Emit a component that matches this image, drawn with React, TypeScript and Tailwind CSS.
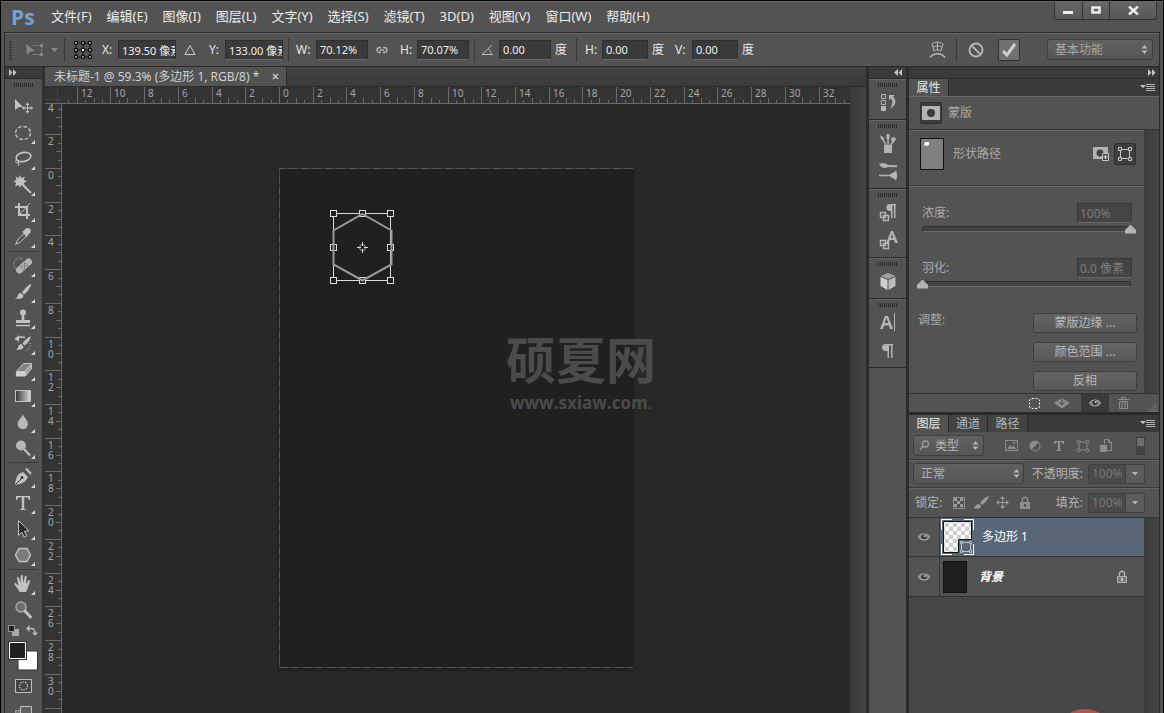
import React from 'react'

const MENUS = ['文件(F)', '编辑(E)', '图像(I)', '图层(L)', '文字(Y)', '选择(S)', '滤镜(T)', '3D(D)', '视图(V)', '窗口(W)', '帮助(H)'];

// pixels per two ruler units at 59.3% zoom
const RULER_STEP = 33.72;

interface IconProps {
  size?: number;
  w?: number;
  h?: number;
  children: React.ReactNode;
}

const Icon = ({ size = 24, w, h, children }: IconProps) => (
  <svg
    width={w || size}
    height={h || size}
    viewBox={`0 0 ${w || size} ${h || size}`}
    fill="none"
    stroke="none"
    className="shrink-0 block"
    aria-hidden="true"
  >
    {children}
  </svg>
);

const L = '#c2c2c2';

const toolIcons: Record<string, React.ReactNode> = {
  move: (
    <>
      <path d="M4 4l8 8H8l-4 3z" fill={L} />
      <path d="M16.5 8v10M11.5 13h10" stroke={L} />
      <path d="M14.5 10l2-2.5 2 2.5zM14.5 16l2 2.5 2-2.5zM13.500 11L11 13l2.500 2zM19.500 11l2.500 2-2.500 2z" fill={L} />
    </>
  ),
  marquee: <ellipse cx="12" cy="12" rx="7.500" ry="6.500" stroke={L} strokeWidth="1.400" strokeDasharray="3.600 1.900" />,
  lasso: (
    <>
      <ellipse cx="12.500" cy="10" rx="7.500" ry="4.500" stroke={L} strokeWidth="1.700" transform="rotate(-12 12.500 10)" />
      <path d="M6 13c-2 0-2 3 0 3s2-2.500.500-3c0 2 2 3 1 6" stroke={L} />
    </>
  ),
  wand: (
    <>
      <path d="M9 2l1.300 3.200L14 3.500l-1.300 3.200L16 8.500l-3.300 1.300L14 14l-3.700-2L9 15l-1.300-3L4 13.500l1.300-3.700L2.500 8.500l3-1.800L4.500 3.500l3 1.700z" fill={L} />
      <path d="M12 12l8 8" stroke={L} strokeWidth="2" />
    </>
  ),
  crop: (
    <>
      <path d="M8 4v12h11M4 8h12v12" stroke={L} strokeWidth="2" />
      <path d="M9 15L19 4" stroke={L} />
    </>
  ),
  dropper: (
    <>
      <path d="M5 19l1.500-4 7-7 2.500 2.500-7 7z" stroke={L} />
      <path d="M11 6.500l2-.500c1-3 4-4 6-2s0 5-2.500 6l-.500 2.500z" fill={L} />
      <path d="M5 19l-1 1" stroke={L} />
    </>
  ),
  heal: (
    <>
      <path d="M11 5c-5-2-8 1-8 5s2 6 5 7" stroke={L} strokeDasharray="1 1.500" />
      <rect x="3.500" y="8.500" width="19" height="7" rx="3.500" fill="#b4b4b4" transform="rotate(-42 13 12)" />
      <path d="M11 12h1M13 10h1M13 14h1M15 12h1M13 12h1" stroke="#484848" />
      <path d="M8.500 12l5 5M13 7.500l5 5" stroke="#7a7a7a" />
    </>
  ),
  brush: (
    <>
      <path d="M20.500 3.500C16 6 12.500 10 11 12.500l2 2C15.500 13 19 8.500 20.500 3.500z" fill={L} />
      <path d="M10 13c-2.500 0-3 2-3.500 3.500-.500 1-1.500 1.500-2.500 2 3.500.700 8.500.500 8.500-3z" fill={L} />
    </>
  ),
  stamp: (
    <>
      <circle cx="12" cy="6.500" r="3" fill={L} />
      <path d="M11 8h2l.500 6H19v3H5v-3h5.500z" fill={L} />
      <path d="M5 19.500h14" stroke={L} strokeWidth="1.500" />
    </>
  ),
  history: (
    <>
      <path d="M20 4c-4 2-7 5-8.500 7.500l2 2C16 12 19 8.500 20 4z" fill={L} />
      <path d="M10.500 12c-2.500 0-3 2-3.500 3.500-.500 1-1 1.500-2 2 3.500.500 7.500.500 7.500-3z" fill={L} />
      <path d="M4 7c3-2 6-2.500 10-1.500" stroke={L} strokeWidth="1.500" />
      <path d="M8 3v7L4 7z" fill={L} />
      <path d="M19 11c1 3-1 7-5 8" stroke={L} strokeDasharray="1 1.500" />
    </>
  ),
  eraser: (
    <>
      <path d="M12.500 5.500h8L14 13.500H5.500z" fill="#828282" stroke={L} />
      <path d="M5.500 13.500H14v5H5.500c-1-1-1-3.500 0-5z" fill="#cfcfcf" />
      <path d="M14.500 13.500L20.500 6.500v4l-6 7.500z" fill="#9d9d9d" stroke={L} />
    </>
  ),
  gradient: (
    <>
      <defs>
        <linearGradient id="tool-grad">
          <stop offset="0" stopColor="#333" />
          <stop offset="1" stopColor="#ddd" />
        </linearGradient>
      </defs>
      <rect x="4.500" y="6.500" width="15" height="11" fill="url(#tool-grad)" stroke={L} />
    </>
  ),
  blur: <path d="M12 4c1 4 5 6 5 10a5.200 5.200 0 01-10.400 0C6.600 10 11 8 12 4z" fill="#b8b8b8" />,
  dodge: (
    <>
      <circle cx="10" cy="9.500" r="5" fill="#b8b8b8" />
      <path d="M13 13l6 6.500" stroke={L} strokeWidth="2" />
    </>
  ),
  pen: (
    <>
      <path d="M4 20c0-5 2-9 4-11l4-2 5 5-2.500 4C12 18 9 19 4 20z" fill={L} />
      <path d="M14 4l2-1 4.500 5-1 2z" fill={L} />
      <path d="M4.500 19.500L11 13" stroke="#333" />
      <circle cx="11" cy="12.500" r="1.500" fill="#333" />
    </>
  ),
  type: <path d="M5 5h14v4h-1c-.300-2-1-2.800-3-2.800h-1.800V17c0 1 .500 1.300 2 1.400v.600H8.800v-.600c1.500-.100 2-.400 2-1.400V6.200H9C7 6.200 6.300 7 6 9H5z" fill={L} />,
  path: <path d="M7.500 3.500v15l3.300-3.200 2.400 4.700 2.500-1.200-2.300-4.500 4.600-.500z" fill="#2a2a2a" stroke={L} />,
  shape: <path d="M8 5.500h8l3.500 6.500-3.500 6.500H8L4.500 12z" fill="#7b7b7b" stroke={L} strokeWidth="1.400" />,
  hand: (
    <path
      d="M8.500 20c-1-3-3-4.500-5-7.500-.400-1.500 1-1.800 2-.800l2 2L6 6c0-1.500 1.600-1.500 2 0l1.500 5L9.700 4c.200-1.500 1.900-1.500 2.100 0l.500 7 1.400-6.500c.500-1.400 2.100-1 1.900.500L15 12l2.300-3.500c1-1.200 2.200-.300 1.700 1-1.500 3.500-2 7-4 10.500z"
      fill={L}
    />
  ),
  zoom: (
    <>
      <circle cx="10" cy="9" r="5" fill="#6e6e6e" stroke="#a8a8a8" strokeWidth="1.500" />
      <path d="M14 13l5.500 6" stroke={L} strokeWidth="3" strokeLinecap="round" />
    </>
  ),
};

const TOOL_GROUPS = [
  [
    ['move', '移动'], ['marquee', '选框'], ['lasso', '套索'], ['wand', '魔棒'], ['crop', '裁剪'], ['dropper', '吸管'],
  ],
  [
    ['heal', '修复'], ['brush', '画笔'], ['stamp', '图章'], ['history', '历史记录画笔'], ['eraser', '橡皮擦'], ['gradient', '渐变'], ['blur', '模糊'], ['dodge', '减淡'],
  ],
  [
    ['pen', '钢笔'], ['type', '文字'], ['path', '路径选择'], ['shape', '多边形'],
  ],
  [
    ['hand', '抓手'], ['zoom', '缩放'],
  ],
];

const NO_FLYOUT = ['move', 'zoom'];

// dotted drag handle
const Grip = () => (
  <div className="h-[4px] w-[20px] bg-[repeating-linear-gradient(90deg,#2c2c2c_0_1px,transparent_1px_2px)]" />
);

const Separator = () => <div className="h-[24px] w-px bg-[#3b3b3b]" />;

const DoubleArrow = ({ left = false }: { left?: boolean }) => (
  <Icon w={9} h={7}>
    <path d={left ? 'M4 0v7L0 3.500zM8 0v7L4.500 3.500z' : 'M1 0v7l3.500-3.500zM5 0v7l3.500-3.500z'} fill="#c4c4c4" />
  </Icon>
);

const UpDown = () => (
  <Icon w={7} h={9}>
    <path d="M3.500 0L6.500 3.500h-6zM3.500 9L.5 5.500h6z" fill="#b5b5b5" />
  </Icon>
);

const PanelMenu = () => (
  <button aria-label="面板菜单" className="mr-[4px]">
    <Icon w={15} h={9}>
      <path d="M0 2h6L3 5z" fill="#c4c4c4" />
      <path d="M6 1.500h9M6 3.500h9M6 5.500h9M6 7.500h9" stroke="#b0b0b0" />
    </Icon>
  </button>
);

const Frame = ({ color = '#a8a8a8', s = 16 }: { color?: string; s?: number }) => (
  <svg width={s} height={s} viewBox="0 0 16 16" fill="none" className="block" aria-hidden="true">
    <path d="M3.500 3.500h9v9h-9z" stroke={color} />
    <g fill="#474747" stroke={color}>
      <path d="M1.500 1.500h3v3h-3zM11.500 1.500h3v3h-3zM1.500 11.500h3v3h-3zM11.500 11.500h3v3h-3z" />
    </g>
  </svg>
);

const Eye = () => (
  <Icon w={12} h={10}>
    <path d="M.5 5C2.500 1 9.500 1 11.500 5 9.500 9 2.500 9 .5 5z" fill="#7d7d7d" stroke="#b8b8b8" />
    <circle cx="6" cy="4.700" r="2.500" fill="#3a3a3a" />
    <circle cx="6.800" cy="4" r="1" fill="#e0e0e0" />
  </Icon>
);

const Lock = ({ color }: { color: string }) => (
  <Icon w={12} h={13}>
    <path d="M3.500 6V3.500c0-3 5-3 5 0V6" stroke={color} strokeWidth="1.400" />
    <path d="M1.500 6.500h9v6h-9z" fill="#777" stroke={color} />
    <path d="M6 8v3" stroke="#e0e0e0" strokeWidth="1.500" />
  </Icon>
);

interface FieldProps {
  label: string;
  value: string;
  labelClass: string;
  inputClass: string;
  unit?: string;
}

const Field = ({ label, value, labelClass, inputClass, unit }: FieldProps) => (
  <label className="flex items-center">
    <span className={labelClass}>{label}</span>
    <input
      type="text"
      defaultValue={value}
      className={`h-[20px] border border-[#2f2f2f] border-b-[#6a6a6a] bg-[#3a3a3a] pl-[3px] text-[11px] text-[#f0f0f0] outline-none ${inputClass}`}
    />
    {unit && <span className="ml-[4px] text-[12px]">{unit}</span>}
  </label>
);

const TitleBar = () => (
  <header className="flex h-[31px] items-start justify-between pl-[10px] pr-[6px]">
    <div className="flex h-full items-center">
      <span className="w-[36px] font-['Open_Sans',sans-serif] text-[21px] font-bold leading-[24px] text-[#73a3d4]">Ps</span>
      <nav className="ml-[4px] flex gap-[15px] text-[13px] text-[#ececec]">
        {MENUS.map((m) => (
          <button key={m} className="whitespace-nowrap">{m}</button>
        ))}
      </nav>
    </div>
    <div className="flex h-[19px] divide-x divide-[#333] rounded-b-[3px] border border-t-0 border-[#333] bg-linear-to-b from-[#676767] to-[#585858]">
      <button aria-label="最小化" className="flex w-[28px] items-center justify-center">
        <Icon w={11} h={9}><path d="M0 5h10v3H0z" fill="#ededed" /></Icon>
      </button>
      <button aria-label="最大化" className="flex w-[27px] items-center justify-center">
        <Icon w={11} h={9}><path d="M1.500 1.500h7v5h-7z" stroke="#ededed" strokeWidth="2.600" /></Icon>
      </button>
      <button aria-label="关闭" className="flex w-[46px] items-center justify-center">
        <Icon w={11} h={9}><path d="M1 .5l9 8M10 .5l-9 8" stroke="#ededed" strokeWidth="2.400" /></Icon>
      </button>
    </div>
  </header>
);

const OptionsBar = () => (
  <section className="flex h-[35px] shrink-0 items-center justify-between border-y border-[#2a2a2a] pr-[6px] text-[12px] text-[#e6e6e6] shadow-[inset_0_1px_0_#686868]">
    <div className="flex items-center">
      <div className="ml-[4px] h-[20px] w-[3px] bg-[repeating-linear-gradient(0deg,#333_0_1px,transparent_1px_2px)]" />
      <button aria-label="变换工具" className="ml-[14px] flex items-center gap-[7px]">
        <Icon w={18} h={14}>
          <path d="M7.500 2.500h8v9h-10" stroke="#868686" strokeDasharray="2 1" />
          <path d="M0 1l9 7-5 .5L1 12z" fill="#868686" />
          <path d="M14 1h3v3h-3zM14 10h3v3h-3z" fill="#868686" />
        </Icon>
        <Icon w={7} h={4}><path d="M0 0h7L3.500 4z" fill="#8a8a8a" /></Icon>
      </button>
      <div className="ml-[6px]"><Separator /></div>
      <div className="ml-[8px]">
        <Icon w={20} h={20}>
          <path d="M3 3h14v14H3zM10 3v14M3 10h14" stroke="#111" />
          <g fill="#8a8a8a" stroke="#0c0c0c">
            <path d="M1.500 1.500h3v3h-3zM8.500 1.500h3v3h-3zM15.500 1.500h3v3h-3zM1.500 8.500h3v3h-3zM15.500 8.500h3v3h-3zM1.500 15.500h3v3h-3zM8.500 15.500h3v3h-3zM15.500 15.500h3v3h-3z" />
          </g>
          <path d="M8.500 8.500h3v3h-3z" fill="#fff" stroke="#0c0c0c" />
        </Icon>
      </div>
      <div className="ml-[9px]">
        <Field label="X:" value="139.50 像素" labelClass="w-[16px]" inputClass="w-[58px]" />
      </div>
      <div className="ml-[8px]">
        <Icon w={12} h={12}><path d="M6 1.500l5 9H1z" stroke="#cfcfcf" /></Icon>
      </div>
      <div className="ml-[13px]">
        <Field label="Y:" value="133.00 像素" labelClass="w-[16px]" inputClass="w-[58px]" />
      </div>
      <div className="ml-[5px]"><Separator /></div>
      <div className="ml-[7px]">
        <Field label="W:" value="70.12%" labelClass="w-[20px]" inputClass="w-[52px]" />
      </div>
      <div className="ml-[8px]">
        <Icon w={12} h={8}>
          <path d="M5 1.500H3.500a2.500 2.500 0 000 5H5M7 1.500h1.500a2.500 2.500 0 010 5H7M3.500 4h5" stroke="#b4b4b4" strokeWidth="1.400" />
        </Icon>
      </div>
      <div className="ml-[12px]">
        <Field label="H:" value="70.07%" labelClass="w-[17px]" inputClass="w-[52px]" />
      </div>
      <div className="ml-[5px]"><Separator /></div>
      <div className="ml-[6px]">
        <Icon w={13} h={12}><path d="M11 1L1 10.500h11M7 4.500c2 1.500 3 3.500 3 6" stroke="#b8b8b8" /></Icon>
      </div>
      <div className="ml-[5px]">
        <Field label="" value="0.00" labelClass="w-0" inputClass="w-[52px]" unit="度" />
      </div>
      <div className="ml-[9px]"><Separator /></div>
      <div className="ml-[8px]">
        <Field label="H:" value="0.00" labelClass="w-[17px]" inputClass="w-[46px]" unit="度" />
      </div>
      <div className="ml-[11px]">
        <Field label="V:" value="0.00" labelClass="w-[17px]" inputClass="w-[46px]" unit="度" />
      </div>
    </div>
    <div className="flex items-center">
      <button aria-label="变形">
        <Icon w={17} h={18}>
          <path d="M3 3c3-2.500 8-2.500 11 0l-2 7c-2-1.500-5-1.500-7 0zM8.500 1v8M4 6c3-1.500 6-1.500 9 0" stroke="#b8b8b8" />
          <path d="M1 16.500c4-5 11-5 15 0" stroke="#b8b8b8" strokeWidth="1.500" />
        </Icon>
      </button>
      <div className="ml-[10px]"><Separator /></div>
      <button aria-label="取消变换" className="ml-[11px]">
        <Icon w={16} h={16}>
          <circle cx="8" cy="8" r="6.500" stroke="#b4b4b4" strokeWidth="2" />
          <path d="M3.500 3.500l9 9" stroke="#b4b4b4" strokeWidth="2" />
        </Icon>
      </button>
      <button aria-label="进行变换" className="ml-[14px] flex h-[22px] w-[22px] items-center justify-center rounded-[2px] border border-[#303030] bg-[#707070]">
        <Icon w={16} h={16}><path d="M2 9l4 4L14 2" stroke="#d0d0d0" strokeWidth="3" /></Icon>
      </button>
      <label className="ml-[27px] flex h-[21px] w-[106px] items-center rounded-[3px] border border-[#3f3f3f] bg-linear-to-b from-[#616161] to-[#555] pl-[7px] pr-[4px]">
        <select aria-label="工作区" className="min-w-0 flex-1 appearance-none bg-transparent text-[12px] text-[#a9a9a9] outline-none">
          <option>基本功能</option>
        </select>
        <UpDown />
      </label>
    </div>
  </section>
);

const Toolbar = () => (
  <aside className="flex w-[40px] shrink-0 flex-col border-r-[3px] border-[#303030] bg-[#535353]">
    <div className="flex h-[12px] shrink-0 items-center border-b border-[#2a2a2a] bg-[#3a3a3a] pl-[3px]">
      <DoubleArrow />
    </div>
    <div className="flex h-[15px] shrink-0 justify-center pt-[4px]"><Grip /></div>
    {TOOL_GROUPS.map((group, i) => (
      <div key={i} className="shrink-0">
        {i > 0 && <div className="mx-[4px] my-[1px] h-px bg-[#3c3c3c]" />}
        {group.map(([id, name]) => (
          <button key={id} aria-label={name} className="flex h-[26px] w-full items-center pl-[6px]">
            <Icon>{toolIcons[id]}</Icon>
            {!NO_FLYOUT.includes(id) && (
              <svg width="4" height="4" viewBox="0 0 4 4" className="-ml-[4px] mb-[2px] self-end" aria-hidden="true">
                <path d="M4 0v4H0z" fill="#dcdcdc" />
              </svg>
            )}
          </button>
        ))}
      </div>
    ))}
    <div className="flex h-[14px] shrink-0 items-center gap-[7px] pl-[3px]">
      <button aria-label="默认颜色">
        <Icon w={11} h={11}>
          <path d="M4 4h7v7H4z" fill="#aaa" />
          <path d="M.5.5h6v6h-6z" fill="#222" stroke="#999" />
        </Icon>
      </button>
      <button aria-label="切换颜色">
        <Icon w={12} h={11}>
          <path d="M2 3.500h3c3 0 4 1.500 4 5" stroke="#b8b8b8" strokeWidth="1.300" />
          <path d="M3.500 0v7L0 3.500zM6 7.500h6L9 11z" fill="#b8b8b8" />
        </Icon>
      </button>
    </div>
    <svg width="30" height="32" viewBox="0 0 30 32" className="ml-[3px] mt-[4px] shrink-0" aria-hidden="true">
      <path d="M10 10h19.500v19H10z" fill="#fff" stroke="#333" />
      <path d="M0 0h19v19H0z" fill="#333" />
      <path d="M1.500 1.500h16v16h-16z" fill="#202020" stroke="#fff" />
    </svg>
    <div className="flex h-[26px] shrink-0 items-center justify-center">
      <button aria-label="快速蒙版">
        <Icon w={17} h={14}>
          <path d="M.5.5h16v13H.5z" fill="#454545" stroke="#bdbdbd" />
          <circle cx="8.500" cy="7" r="4" stroke="#ddd" strokeWidth="1.200" strokeDasharray="1.200 1.300" />
        </Icon>
      </button>
    </div>
    <div className="flex shrink-0 justify-center pt-[7px]">
      <button aria-label="屏幕模式">
        <Icon w={17} h={14}>
          <path d="M.5 4.500h7v9h-7z" fill="#777" stroke="#999" />
          <path d="M5.500.5h11v9h-11z" fill="#606060" stroke="#c2c2c2" />
        </Icon>
      </button>
    </div>
  </aside>
);

const range = (from: number, to: number) => Array.from({ length: to - from + 1 }, (_, i) => from + i);

const HorizontalRuler = () => {
  const zero = 234;
  return (
    <svg className="block h-[17px] w-full bg-[#333]" fontSize="10" fill="#a6a6a6" aria-label="水平标尺">
      {range(-6, 16).map((n) => {
        const x = Math.round(zero + n * RULER_STEP);
        return (
          <g key={n}>
            <path d={`M${x}.5 0v16`} stroke="#6a6a6a" />
            <text x={x + 4} y="10">{Math.abs(n * 2)}</text>
          </g>
        );
      })}
      {range(-25, 200).map((n) => {
        if (n % 4 === 0) return null;
        const x = Math.round(zero + (n * RULER_STEP) / 4);
        return <path key={n} d={`M${x}.5 ${n % 2 === 0 ? 11 : 13}V16`} stroke="#6a6a6a" />;
      })}
      <path d="M0 16.500h4000" stroke="#6a6a6a" />
      <path d="M12.500 0v17M0 12.500h17" stroke="#555" strokeDasharray="1 1" />
    </svg>
  );
};

const VerticalRuler = () => {
  const zero = 64;
  return (
    <svg className="block h-full w-[17px] shrink-0 bg-[#333]" fontSize="10" fill="#a6a6a6" aria-label="垂直标尺">
      {range(-2, 15).map((n) => {
        const y = Math.round(zero + n * RULER_STEP);
        return (
          <g key={n}>
            <path d={`M0 ${y}.5h16`} stroke="#6a6a6a" />
            {String(Math.abs(n * 2)).split('').map((d, i) => (
              <text key={i} x="3" y={y + 11 + i * 10}>{d}</text>
            ))}
          </g>
        );
      })}
      {range(-8, 160).map((n) => {
        if (n % 4 === 0 && n < 64) return null;
        const y = Math.round(zero + (n * RULER_STEP) / 4);
        const start = n % 4 === 0 ? 0 : n % 2 === 0 ? 11 : 13;
        return <path key={n} d={`M${start} ${y}.5H16`} stroke="#6a6a6a" />;
      })}
      <path d="M16.500 0v4000" stroke="#6a6a6a" />
    </svg>
  );
};

const HANDLES = [[3, 3], [32, 3], [60, 3], [3, 37], [60, 37], [3, 70], [32, 70], [60, 70]];

const Artboard = () => (
  <div className="relative min-w-0 flex-1 overflow-hidden bg-[#282828]">
    <div className="absolute left-[217px] top-[64px] bg-[#202020] shadow-[0_2px_3px_#1c1c1c]">
      <svg width="354" height="500" viewBox="0 0 354 500" fill="none" className="block" aria-hidden="true">
        <path d="M354 .5H.5v499H354" stroke="#3e3e3e" />
        <path d="M354 .5H.5v499H354" stroke="#585858" strokeDasharray="8 4" />
      </svg>
    </div>
    <svg width="66" height="75" viewBox="0 0 66 75" fill="none" className="absolute left-[268px] top-[106px]" aria-label="多边形 1">
      <path d="M3.500 3.500h57v67h-57z" stroke="#dcdcdc" />
      <g fill="#202020" stroke="#dcdcdc">
        {HANDLES.map(([x, y]) => (
          <rect key={`${x}-${y}`} x={x - 2.5} y={y - 2.5} width="6" height="6" />
        ))}
      </g>
      <path d="M32.500 4L61.500 20.500v34L32.500 70.500 3.500 54.500v-34z" stroke="#9a9a9a" strokeWidth="2" />
      <circle cx="32.500" cy="37.500" r="3" stroke="#a0a0a0" />
      <path d="M32.500 32v4M32.500 39v4M27 37.500h4M34 37.500h4" stroke="#dcdcdc" />
    </svg>
    <div className="absolute left-[444px] top-[225px] font-bold text-[#4b4b4b]">
      <div className="text-[50px] leading-[62px]">硕夏网</div>
      <div className="ml-[4px] font-['Open_Sans',sans-serif] text-[17px] leading-[24px]">www.sxiaw.com<span className="text-[12px]">.</span></div>
    </div>
  </div>
);

const DocumentArea = () => (
  <main className="flex min-w-0 flex-1 flex-col bg-[#404040]">
    <div className="flex h-[20px] shrink-0 border-b border-[#2c2c2c] bg-linear-to-b from-[#444] to-[#393939]">
      <div className="flex w-[242px] items-center justify-between border-r border-[#2c2c2c] bg-[#535353] pl-[9px] pr-[7px] text-[12px] text-[#d2d2d2]">
        <span className="whitespace-nowrap">未标题-1 @ 59.3% (多边形 1, RGB/8) *</span>
        <button aria-label="关闭文档">
          <Icon w={7} h={7}><path d="M1 1l5 5M6 1L1 6" stroke="#c8c8c8" strokeWidth="1.500" /></Icon>
        </button>
      </div>
    </div>
    <div className="flex min-h-0 flex-1">
      <div className="flex min-w-0 flex-1 flex-col">
        <HorizontalRuler />
        <div className="flex min-h-0 flex-1">
          <VerticalRuler />
          <Artboard />
        </div>
      </div>
      <div className="w-[16px] shrink-0 bg-linear-to-r from-[#393939] to-[#444]" />
    </div>
  </main>
);

const G = '#b4b4b4';

const DOCK: { name: string; icon: React.ReactNode }[][] = [
  [
    {
      name: '历史记录',
      icon: (
        <>
          <path d="M3.500 2.500h4v4h-4zM3.500 8.500h4v4h-4z" stroke={G} />
          <path d="M3 14h5v5H3z" fill={G} />
          <path d="M11 3h6l-2 1.500c4 4 3 9-3 12 3-4 3-7 1-10L11 8z" fill={G} />
        </>
      ),
    },
  ],
  [
    {
      name: '画笔',
      icon: (
        <>
          <path d="M6 12h8v8H6z" fill={G} />
          <path d="M8 12L4 5M10 12V4M12.500 12l4-5" stroke={G} strokeWidth="1.500" />
          <path d="M2 2l4 3v3L3 6zM8.500 1h3v5h-3zM13 6l1.500-2L18 5l-1 3-3 1z" fill={G} />
        </>
      ),
    },
    {
      name: '画笔预设',
      icon: (
        <>
          <path d="M1 3c3-1 7-1 9 1l9 .3v2L10 6C7 8 3 7 1 3z" fill={G} />
          <path d="M1 14.500h12" stroke={G} strokeWidth="1.500" />
          <path d="M12 14c1-2 4-2 6-4.500 1.500 3 1.500 7 0 10-2-2.500-5-2.500-6-4.500z" fill={G} />
        </>
      ),
    },
  ],
  [
    {
      name: '段落样式',
      icon: (
        <>
          <path d="M18 2h-6c-5 0-5 7 0 7h1v7h1.500V3.500H16V16h1.500V3.500h.5z" fill={G} />
          <path d="M2.500 10.500h5v5h-5zM5.500 13.500h5v5h-5z" fill="#535353" stroke={G} strokeWidth="1.400" />
        </>
      ),
    },
    {
      name: '字符样式',
      icon: (
        <>
          <path d="M8 13l5-12h2l5 12h-3l-1-3h-4l-1 3zM12.700 8h2.600L14 4z" fill={G} />
          <path d="M2.500 10.500h5v5h-5zM5.500 13.500h5v5h-5z" fill="#535353" stroke={G} strokeWidth="1.400" />
        </>
      ),
    },
  ],
  [
    {
      name: '3D',
      icon: (
        <>
          <path d="M10 2l7.500 3L10 8 2.500 5z" fill="#a0a0a0" />
          <path d="M2.500 6l7 3v10l-7-4z" fill="#d0d0d0" />
          <path d="M17.500 6l-7 3v10l7-4z" fill="#bcbcbc" />
        </>
      ),
    },
  ],
  [
    {
      name: '字符',
      icon: (
        <>
          <path d="M2 17L7 4h3l5 13h-3l-1-3.500H6L5 17zM6.700 11h3.600L8.500 6z" fill={G} />
          <path d="M16.500 1v18" stroke={G} />
        </>
      ),
    },
    {
      name: '段落',
      icon: <path d="M15 4H8c-5.500 0-5.500 7 0 7h1.500v7H11V5.500h2V18h1.500V5.500h.5z" fill={G} />,
    },
  ],
];

const IconDock = () => (
  <aside className="flex w-[43px] shrink-0 flex-col border-x-[3px] border-[#2c2c2c] bg-[#535353]">
    <div className="flex h-[12px] shrink-0 items-center justify-end border-b border-[#2a2a2a] bg-[#3a3a3a] pr-[3px]">
      <DoubleArrow left />
    </div>
    {DOCK.map((items, i) => (
      <div key={i} className="flex shrink-0 flex-col items-center border-b border-[#2a2a2a] pb-[3px] pt-[4px] shadow-[inset_0_1px_0_#646464]">
        <Grip />
        <div className="pt-px">
          {items.map((item) => (
            <button key={item.name} aria-label={item.name} className="flex h-[28px] items-center">
              <Icon size={20}>{item.icon}</Icon>
            </button>
          ))}
        </div>
      </div>
    ))}
  </aside>
);

const MaskSlider = ({ label, value, amount }: { label: string; value: string; amount: number }) => (
  <div className="h-[55px]">
    <div className="flex items-center justify-between pl-[13px] pr-[12px]">
      <label htmlFor={label}>{label}:</label>
      <input
        id={label}
        type="text"
        disabled
        defaultValue={value}
        className="h-[20px] w-[55px] border border-[#383838] border-b-[#666] bg-[#444] pl-[2px] text-[12px] text-[#7c7c7c]"
      />
    </div>
    <div className="relative mx-[8px] h-[12px]">
      <div className="absolute inset-x-[5px] top-[3px] h-[6px] rounded-[3px] border border-[#303030] border-b-[#6a6a6a] bg-[#424242]" />
      <input
        type="range"
        aria-label={label}
        defaultValue={amount}
        className="absolute inset-x-0 top-0 h-[12px] w-full appearance-none bg-transparent [&::-webkit-slider-thumb]:h-[9px] [&::-webkit-slider-thumb]:w-[11px] [&::-webkit-slider-thumb]:appearance-none [&::-webkit-slider-thumb]:bg-[#b4b4b4] [&::-webkit-slider-thumb]:[clip-path:polygon(50%_0,100%_60%,100%_100%,0_100%,0_60%)]"
      />
    </div>
  </div>
);

const PanelButton = ({ children }: { children: React.ReactNode }) => (
  <button className="h-[20px] w-[104px] rounded-[3px] border border-[#3e3e3e] bg-linear-to-b from-[#646464] to-[#585858] text-[12px] leading-[18px] text-[#b8b8b8]">
    {children}
  </button>
);

const PropertiesPanel = () => (
  <section className="shrink-0 text-[12px] text-[#a9a9a9]">
    <div className="flex h-[17px] items-center justify-between bg-[#3a3a3a]">
      <h2 className="flex h-full w-[40px] items-center justify-center border-r border-[#2a2a2a] bg-[#535353] text-[12px] text-[#e6e6e6]">属性</h2>
      <PanelMenu />
    </div>
    <div className="flex h-[34px] items-center gap-[6px] border-b border-[#333] pl-[11px] shadow-[inset_0_1px_0_#686868]">
      <span className="flex h-[22px] w-[22px] items-center justify-center rounded-[2px] border border-[#2e2e2e] bg-[#3c3c3c]">
        <Icon w={18} h={14}>
          <path d="M0 0h18v14H0z" fill="#b2b2b2" />
          <circle cx="9" cy="7" r="4" fill="#3c3c3c" />
        </Icon>
      </span>
      <span>蒙版</span>
    </div>
    <div className="flex">
      <div className="min-w-0 flex-1">
        <div className="flex h-[56px] items-center justify-between border-b border-[#383838] pb-[7px] pl-[11px] pr-[8px] shadow-[inset_0_1px_0_#686868]">
          <div className="flex items-center gap-[9px]">
            <span className="h-[32px] w-[24px] border border-[#111] bg-[#808080] pl-[3px] pt-[3px]">
              <Icon w={5} h={5}><path d="M1 0h4v3L3 4 0 3z" fill="#fff" /></Icon>
            </span>
            <span>形状路径</span>
          </div>
          <div className="flex items-center gap-[4px]">
            <button aria-label="添加蒙版">
              <Icon w={17} h={14}>
                <path d="M0 0h15v12H0z" fill="#b2b2b2" />
                <circle cx="7" cy="6" r="3.500" fill="#444" />
                <path d="M9.500 6.500h6v7h-6z" fill="#444" stroke="#c6c6c6" />
                <path d="M12.500 8v4M10.500 10h4" stroke="#eee" />
              </Icon>
            </button>
            <button aria-label="矢量蒙版" className="flex h-[22px] w-[22px] items-center justify-center rounded-[2px] border border-[#2e2e2e] bg-[#3e3e3e]">
              <Frame color="#c6c6c6" />
            </button>
          </div>
        </div>
        <div className="h-[207px] pt-[17px] shadow-[inset_0_1px_0_#686868]">
          <MaskSlider label="浓度" value="100%" amount={100} />
          <MaskSlider label="羽化" value="0.0 像素" amount={0} />
          <div className="flex justify-between pl-[9px] pr-[7px]">
            <span className="leading-[14px]">调整:</span>
            <div className="flex flex-col gap-[9px]">
              <PanelButton>蒙版边缘 ...</PanelButton>
              <PanelButton>颜色范围 ...</PanelButton>
              <PanelButton>反相</PanelButton>
            </div>
          </div>
        </div>
      </div>
      <div className="w-[15px] border-l border-[#3a3a3a] bg-linear-to-r from-[#3e3e3e] to-[#464646]" />
    </div>
    <div className="flex h-[19px] items-center border-t border-[#333] bg-[#535353] pl-[120px]">
      <button aria-label="载入选区">
        <Icon w={11} h={11}><path d="M3 .5h5a2.500 2.500 0 012.500 2.500v5A2.500 2.500 0 018 10.500H3A2.500 2.500 0 01.5 8V3A2.500 2.500 0 013 .5z" stroke="#fff" strokeDasharray="2 1.500" /></Icon>
      </button>
      <button aria-label="应用蒙版" className="ml-[14px]">
        <Icon w={16} h={12}>
          <path d="M0 6l8-5 8 5-8 5.500z" fill="#8a8a8a" />
          <path d="M8 1v6M5.500 5L8 8l2.500-3" stroke="#444" />
        </Icon>
      </button>
      <button aria-label="停用蒙版" className="ml-[11px] flex h-full w-[28px] items-center justify-center bg-[#3a3a3a]"><Eye /></button>
      <button aria-label="删除蒙版" className="ml-[9px]">
        <Icon w={11} h={12}>
          <path d="M0 2.500h11M3.500 2V.5h4V2M1.500 4.500h8v7h-8zM4 4v7M7 4v7" stroke="#8c8c8c" />
        </Icon>
      </button>
      <span className="ml-auto mr-[2px] mt-auto">
        <Icon w={9} h={9}><path d="M8 0v9M6 2v7M4 4v5M2 6v3M0 8v1" stroke="#888" strokeDasharray="1 1" /></Icon>
      </span>
    </div>
  </section>
);

const PercentBox = ({ label, name }: { label: string; name: string }) => (
  <div className="flex items-center gap-[5px]">
    <label htmlFor={name}>{label}:</label>
    <div className="flex h-[20px] w-[57px] rounded-[2px] border border-[#404040]">
      <input id={name} disabled defaultValue="100%" className="w-[36px] bg-[#4a4a4a] pl-[3px] text-[12px] text-[#767676]" />
      <button aria-label={`${label}选项`} className="flex flex-1 items-center justify-center border-l border-[#404040] bg-[#5c5c5c]">
        <Icon w={6} h={4}><path d="M0 0h6L3 3.500z" fill="#b5b5b5" /></Icon>
      </button>
    </div>
  </div>
);

const LayersPanel = () => (
  <section className="flex min-h-0 flex-1 flex-col border-t-[3px] border-[#2a2a2a] text-[12px] text-[#b4b4b4]">
    <div className="flex h-[17px] shrink-0 items-center justify-between bg-[#3a3a3a]">
      <div role="tablist" className="flex h-full">
        <button role="tab" aria-selected="true" className="w-[40px] border-r border-[#2a2a2a] bg-[#535353] leading-[17px] text-[#ececec]">图层</button>
        <button role="tab" className="w-[39px] border-r border-[#2a2a2a] bg-[#444] leading-[17px]">通道</button>
        <button role="tab" className="w-[40px] border-r border-[#2a2a2a] bg-[#444] leading-[17px]">路径</button>
      </div>
      <PanelMenu />
    </div>
    <div className="flex h-[28px] shrink-0 items-center border-b border-[#3a3a3a] pl-[4px] pr-[14px]">
      <label className="flex h-[21px] w-[71px] items-center rounded-[3px] border border-[#3f3f3f] bg-linear-to-b from-[#616161] to-[#565656] px-[4px]">
        <Icon w={14} h={11}>
          <circle cx="7.500" cy="4" r="3" stroke="#9a9a9a" strokeWidth="1.400" />
          <path d="M5.500 6L2 9.500" stroke="#9a9a9a" strokeWidth="1.600" />
        </Icon>
        <select aria-label="图层类型" className="ml-[3px] min-w-0 flex-1 appearance-none bg-transparent text-[12px] outline-none">
          <option>类型</option>
        </select>
        <UpDown />
      </label>
      <div className="ml-[21px] flex flex-1 items-center gap-[10px]">
        <button aria-label="像素图层">
          <Icon w={13} h={12}>
            <path d="M.5.5h12v10H.5z" stroke="#8e8e8e" />
            <path d="M2 9l3-4 2 2 2-1.500L11 9z" fill="#8e8e8e" />
            <path d="M8 3h2" stroke="#8e8e8e" strokeWidth="2" />
          </Icon>
        </button>
        <button aria-label="调整图层">
          <Icon w={14} h={12}>
            <circle cx="7" cy="6" r="5" stroke="#8e8e8e" />
            <path d="M3.500 9.500a5 5 0 010-7c2-2 5-2 7 0z" fill="#8e8e8e" />
          </Icon>
        </button>
        <button aria-label="文字图层">
          <Icon w={14} h={12}><path d="M2 1h10v3h-1L10 2.300H8V10l1.500.5v.5h-5v-.5L6 10V2.300H4L3 4H2z" fill="#939393" /></Icon>
        </button>
        <button aria-label="形状图层"><Frame color="#8e8e8e" s={14} /></button>
        <button aria-label="智能对象">
          <Icon w={13} h={13}>
            <path d="M4.500 5V.5h4l3 3v8h-5M8.500.5v3h3" stroke="#8e8e8e" />
            <path d="M0 6h7v7H0z" fill="#8e8e8e" />
          </Icon>
        </button>
      </div>
      <button aria-label="打开图层过滤" className="flex h-[18px] w-[9px] items-start border border-[#3e3e3e] bg-[#444]">
        <span className="h-[8px] w-full bg-[#6c6c6c]" />
      </button>
    </div>
    <div className="flex h-[28px] shrink-0 items-center justify-between border-b border-[#3a3a3a] pl-[4px] pr-[14px] shadow-[inset_0_1px_0_#646464]">
      <label className="flex h-[21px] w-[111px] items-center rounded-[3px] border border-[#3f3f3f] bg-linear-to-b from-[#616161] to-[#565656] pl-[7px] pr-[3px]">
        <select aria-label="混合模式" className="min-w-0 flex-1 appearance-none bg-transparent text-[12px] outline-none">
          <option>正常</option>
        </select>
        <UpDown />
      </label>
      <PercentBox label="不透明度" name="opacity" />
    </div>
    <div className="flex h-[30px] shrink-0 items-center border-b border-[#333] pl-[6px] pr-[14px] shadow-[inset_0_1px_0_#646464]">
      <span className="w-[38px]">锁定:</span>
      <div className="flex flex-1 items-center gap-[8px]">
        <button aria-label="锁定透明像素">
          <Icon w={12} h={12}>
            <path d="M.5.5h11v11H.5z" stroke="#8e8e8e" />
            <path d="M1 1h3v3H1zM7 1h3v3H7zM4 4h3v3H4zM1 7h3v3H1zM7 7h3v3H7z" fill="#9a9a9a" />
          </Icon>
        </button>
        <button aria-label="锁定图像像素">
          <Icon w={17} h={14}>
            <path d="M16 0c-4 1-8 5-9 7l2 2c2-1 6-5 7-9zM6 8c-3 0-3 3-6 4 3 1.500 8 1 8-2z" fill="#999" />
          </Icon>
        </button>
        <button aria-label="锁定位置" className="-ml-[2px]">
          <Icon w={13} h={13}>
            <path d="M6.500 1v11M1 6.500h11" stroke="#999" />
            <path d="M4 3l2.500-3L9 3zM4 10l2.500 3L9 10zM3 4L0 6.500 3 9zM10 4l3 2.500L10 9z" fill="#999" />
          </Icon>
        </button>
        <button aria-label="锁定全部" className="ml-[2px]">
          <Icon w={12} h={13}>
            <path d="M3.500 6V3.500c0-3 5-3 5 0V6" stroke="#8e8e8e" strokeWidth="1.400" />
            <path d="M1 6h10v7H1z" fill="#8e8e8e" />
            <path d="M6 8v3" stroke="#444" strokeWidth="1.500" />
          </Icon>
        </button>
      </div>
      <PercentBox label="填充" name="fill" />
    </div>
    <div className="flex min-h-0 flex-1 bg-[#464646]">
      <ul className="min-w-0 flex-1 text-white">
        <li className="flex h-[39px] border-b border-[#333] bg-[#596678]">
          <button aria-label="显示图层" className="flex w-[31px] items-center justify-center border-r border-[#3a3a3a] bg-[#535353]"><Eye /></button>
          <svg width="33" height="36" viewBox="0 0 33 36" className="ml-[1px] mt-[1px] shrink-0" fill="none" aria-hidden="true">
            <defs>
              <pattern id="checker" width="8" height="8" patternUnits="userSpaceOnUse">
                <path d="M0 0h8v8H0z" fill="#fff" />
                <path d="M0 0h4v4H0zM4 4h4v4H4z" fill="#ccc" />
              </pattern>
            </defs>
            <path d="M.5 11V.5H11M23 .5h9.500V11M.5 25v10.500H11M23 35.500h9.500V25" stroke="#fff" />
            <path d="M2.500 2.500h28v18h-13v13h-15z" fill="url(#checker)" stroke="#111" />
            <path d="M20.500 23.500h9v9h-9z" stroke="#b9c2ce" />
            <path d="M19.500 22.500h2v2h-2zM28.500 22.500h2v2h-2zM19.500 31.500h2v2h-2zM28.500 31.500h2v2h-2z" fill="#596678" stroke="#b9c2ce" />
          </svg>
          <span className="ml-[8px] self-center">多边形 1</span>
        </li>
        <li className="flex h-[40px] items-center border-b border-[#333] bg-[#535353]">
          <button aria-label="显示图层" className="flex h-full w-[31px] items-center justify-center border-r border-[#3a3a3a]"><Eye /></button>
          <span className="ml-[3px] h-[32px] w-[24px] border border-[#111] bg-[#202020]" />
          <span className="ml-[12px] flex-1 font-bold italic">背景</span>
          <span className="mr-[16px]"><Lock color="#b4b4b4" /></span>
        </li>
      </ul>
      <div className="w-[15px] bg-linear-to-r from-[#3c3c3c] to-[#444]" />
    </div>
  </section>
);

const App = () => (
  <div className="relative flex h-screen flex-col overflow-hidden border-x border-t border-black bg-[#535353] font-['Noto_Sans','Noto_Sans_CJK_SC',sans-serif] shadow-[inset_0_1px_0_#686868]">
    <TitleBar />
    <div className="mx-[3px] flex min-h-0 flex-1 flex-col border-x border-[#2a2a2a]">
      <OptionsBar />
      <div className="flex min-h-0 flex-1">
        <Toolbar />
        <DocumentArea />
        <IconDock />
        <div className="flex w-[250px] shrink-0 flex-col">
          <div className="flex h-[12px] shrink-0 items-center justify-end border-b border-[#2a2a2a] bg-[#3a3a3a] pr-[3px]">
            <DoubleArrow />
          </div>
          <PropertiesPanel />
          <LayersPanel />
        </div>
      </div>
    </div>
    <div className="absolute -bottom-[56px] right-[48px] h-[60px] w-[60px] rounded-full bg-[#b25353]" />
  </div>
);

export default App
